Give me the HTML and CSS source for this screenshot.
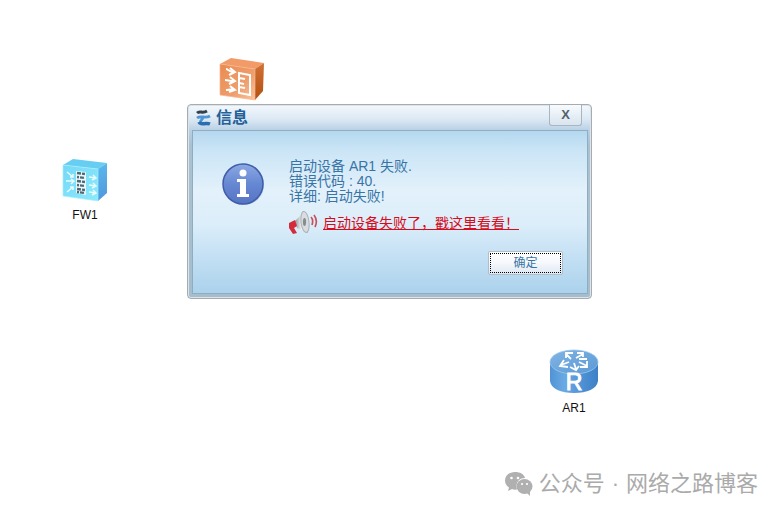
FILE: index.html
```html
<!DOCTYPE html>
<html lang="zh-CN">
<head>
<meta charset="utf-8">
<title>信息</title>
<link rel="stylesheet" href="styles.css">
</head>
<body>
<main class="canvas">
  <div class="node node-switch">
    <svg width="46" height="44" viewBox="0 0 46 44" aria-hidden="true">
      <defs>
        <linearGradient id="orangeFront" x1="0" y1="0" x2="1" y2="1"><stop offset="0" stop-color="#ea8a50"/><stop offset=".6" stop-color="#ee9e6d"/><stop offset="1" stop-color="#fbc39b"/></linearGradient>
        <linearGradient id="orangeSide" x1="0" y1="0" x2="0" y2="1"><stop offset="0" stop-color="#d07135"/><stop offset="1" stop-color="#b4500f"/></linearGradient>
      </defs>
      <path d="M1 7 12 1 45 6 36 12Z" fill="#f29a68"/>
      <path d="M36 12 45 6 44 34 36 43Z" fill="url(#orangeSide)"/>
      <path d="M1 7 36 12V43L1 38Z" fill="url(#orangeFront)" stroke="#f8b68c" stroke-width=".7"/>
      <g fill="none" stroke="#fff" stroke-width="2">
        <path d="M7 12c2 0 3 3 8 3M11 11l5 4-6 3M6 23c3 0 4 1 9 1M11 20l5 4-6 3M7 33c3 0 4-1 8 0M11 29l5 4-6 2"/>
        <path d="M20 16 31 18V38L20 36ZM20 21l6 1M20 26l5 1M20 30l6 1"/>
      </g>
    </svg>
  </div>
  <div class="node node-firewall">
    <svg width="46" height="44" viewBox="0 0 46 44" aria-hidden="true">
      <defs>
        <linearGradient id="cyanFront" x1="0" y1="0" x2="1" y2="1"><stop offset="0" stop-color="#75d8f6"/><stop offset="1" stop-color="#8aeafd"/></linearGradient>
        <linearGradient id="cyanSide" x1="0" y1="0" x2="0" y2="1"><stop offset="0" stop-color="#59b8ec"/><stop offset="1" stop-color="#5097dc"/></linearGradient>
      </defs>
      <path d="M1 7 11 1 45 5 36 11Z" fill="#68cdf2"/>
      <path d="M36 11 45 5V35L36 43Z" fill="url(#cyanSide)"/>
      <path d="M1 7 36 11V43L1 38Z" fill="url(#cyanFront)" stroke="#a4effd" stroke-width=".7"/>
      <path d="M14 13 24 14V37L14 35Z" fill="#eafaff"/>
      <g stroke="#4f6973" stroke-width="2.5">
        <path d="M15 15l8 1M15 23l8 1M15 31l8 1" stroke-dasharray="4 1"/>
        <path d="M15 19l8 1M15 27l8 1M15 34l8 1" stroke-dasharray="2 1 4 1"/>
      </g>
      <g fill="none" stroke="#e8fcff" stroke-width="1.5">
        <path d="M5 14l6 5M11 16v3H8M4 23h8M9 21l3 2-3 3M5 34l6-5M8 29h3v3M27 19l7 1M31 17l3 3-4 2M27 27l7 1M31 25l3 3-4 2M27 34l7 1M31 32l3 3-4 2"/>
      </g>
    </svg>
    <span class="node-label">FW1</span>
  </div>
  <div class="node node-router">
    <svg width="50" height="46" viewBox="0 0 50 46" aria-hidden="true">
      <defs>
        <linearGradient id="routerSide" x1="0" y1="0" x2="1" y2="0"><stop offset="0" stop-color="#5093d5"/><stop offset=".3" stop-color="#6ba9e4"/><stop offset=".7" stop-color="#4d8fd3"/><stop offset="1" stop-color="#3e80c6"/></linearGradient>
        <linearGradient id="routerTop" x1="0" y1="0" x2="1" y2="1"><stop offset="0" stop-color="#81b4e2"/><stop offset="1" stop-color="#5b99d6"/></linearGradient>
      </defs>
      <path d="M1 13V32C2 40 12 44 25 44S48 40 49 32V13Z" fill="url(#routerSide)"/>
      <ellipse cx="25" cy="13" rx="24" ry="12" fill="url(#routerTop)" stroke="#9bc6ec" stroke-width=".8"/>
      <g fill="none" stroke="#fff" stroke-width="1.8">
        <path d="M22 10 17 5M17 9V4h7M27 9l7-4M28 4h6v4M20 13l-8 3M15 11l-4 6 8 1M30 13l8 4M38 12v6h-7M30 10h8M25 14l2 6M21 18l6 3 3-4"/>
      </g>
      <text class="router-letter" x="25" y="41" text-anchor="middle">R</text>
    </svg>
    <span class="node-label">AR1</span>
  </div>

  <section class="dialog" role="dialog" aria-labelledby="dialog-title">
    <header class="titlebar">
      <svg width="16" height="18" viewBox="0 0 16 18" aria-hidden="true">
        <path d="M1 4C4 1 6 5 11 2" fill="none" stroke="#34404c" stroke-width="3"/>
        <path d="M1 9C5 6 9 10 14 7M7 9 4 13" fill="none" stroke="#4f94d3" stroke-width="2.8"/>
        <path d="M3 13C5 17 9 13 14 15" fill="none" stroke="#286eb1" stroke-width="3.5"/>
      </svg>
      <h1 class="title" id="dialog-title">信息</h1>
      <button class="close" type="button" aria-label="关闭">X</button>
    </header>
    <div class="body">
      <svg class="info-icon" width="44" height="44" viewBox="0 0 44 44" aria-hidden="true">
        <defs><linearGradient id="infoFill" x1="0" y1="0" x2="0" y2="1"><stop offset="0" stop-color="#8ca9e3"/><stop offset=".5" stop-color="#6687d2"/><stop offset="1" stop-color="#5674c4"/></linearGradient></defs>
        <circle cx="23" cy="23" r="20" fill="#9eb7da" opacity=".6"/>
        <circle cx="22" cy="22" r="20" fill="url(#infoFill)" stroke="#3f5ca9" stroke-width="1.5"/>
        <circle cx="22" cy="11" r="3.500" fill="#fff"/>
        <path d="M16 17H25V32H28V35H16V32H19V20H16Z" fill="#fff"/>
      </svg>
      <div class="content">
        <p class="message">启动设备<span class="latin"> AR1 </span>失败<span class="latin">.</span><br>错误代码<span class="latin"> : 40.</span><br>详细<span class="latin">: </span>启动失败<span class="latin">!</span></p>
        <div class="help">
          <svg width="30" height="26" viewBox="0 0 30 26" aria-hidden="true">
            <defs><linearGradient id="hornFill"><stop offset="0" stop-color="#8e969b"/><stop offset=".5" stop-color="#f0f2f3"/><stop offset="1" stop-color="#a8b0b5"/></linearGradient></defs>
            <path d="M6 11 15 2 19 23 8 18Z" fill="url(#hornFill)"/>
            <ellipse cx="16" cy="12" rx="4" ry="10.500" transform="rotate(-7 16 12)" fill="#d9dde0" stroke="#a9b1b5"/>
            <ellipse cx="15.500" cy="12" rx="1.600" ry="4" fill="#858d92"/>
            <path d="M0 13 6 10 8 16 5 18 8 23 4 24 0 18Z" fill="#d32b3c"/>
            <path d="M22 7C24 9 24 12 23 15M25 5C28 9 28 13 26 17" fill="none" stroke="#c8525a" stroke-width="1.700"/>
          </svg>
          <a class="help-link" href="#help">启动设备失败了，戳这里看看！</a>
        </div>
      </div>
      <button class="confirm" type="button">确定</button>
    </div>
  </section>

  <div class="watermark">
    <svg width="30" height="26" viewBox="0 0 30 26" aria-hidden="true">
      <path d="M11 1C5 1 1 5 1 9.500C1 12.500 2.500 15 5 16.500L4 20 8 18Q10 19 13 18.500C11 12 15 7 21 7C20 3 16 1 11 1Z" fill="#b0b0b0"/>
      <ellipse cx="20.500" cy="15.500" rx="8" ry="7.500" fill="#b0b0b0"/>
      <path d="M22 21 26 25 26 19Z" fill="#b0b0b0"/>
      <g fill="#fff"><circle cx="7.500" cy="7" r="1.300"/><circle cx="14" cy="7" r="1.300"/><circle cx="18" cy="13" r="1.100"/><circle cx="23" cy="13" r="1.100"/></g>
    </svg>
    <span class="watermark-text"><span>公众号</span><span>·</span><span>网络之路博客</span></span>
  </div>
</main>
</body>
</html>
```

FILE: styles.css
```css
* {
  box-sizing: border-box;
}

body {
  margin: 0;
  background: #fff;
  font-family: "Liberation Sans", "Noto Sans CJK SC", sans-serif;
}

.canvas {
  position: relative;
  min-height: 100vh;
  overflow: hidden;
}

svg {
  display: block;
  flex: none;
}

/* Devices placed freely on the topology canvas */
.node {
  position: absolute;
  display: flex;
  flex-direction: column;
  align-items: center;
  gap: 4px;
}

.node-switch {
  left: 219px;
  top: 57px;
}

.node-firewall {
  left: 62px;
  top: 158px;
}

.node-router {
  left: 549px;
  top: 349px;
}

.node-label {
  font-size: 12px;
  line-height: 18px;
  color: #111;
}

.router-letter {
  font-size: 23px;
  fill: #fff;
  stroke: #fff;
  stroke-width: 1px;
}

/* Dialog window */
.dialog {
  position: absolute;
  left: 187px;
  top: 104px;
  width: 405px;
  padding: 0 3px 4px 4px;
  border: 1px solid #a5adb3;
  border-radius: 4px;
  background: linear-gradient(#f3f8fc, #dce9f4 14px, #b7cfe4 26px, #a9c1d1 40px, #a5bdcc);
  box-shadow: inset 0 0 0 1px #dce4e9;
}

.titlebar {
  display: flex;
  align-items: flex-start;
  gap: 4px;
  height: 25px;
  padding: 0 6px 0 4px;
}

.titlebar svg {
  margin-top: 4px;
}

.title {
  flex: 1;
  margin: 0;
  font-size: 16px;
  line-height: 25px;
  color: #24619a;
}

.close {
  width: 33px;
  height: 21px;
  padding: 0;
  border: 1px solid #a9b5c0;
  border-top: 0;
  border-radius: 0 0 3px 3px;
  background: linear-gradient(#f8fbfd, #d8e4ef);
  font: bold 13px/20px "Liberation Sans", sans-serif;
  color: #54616c;
}

.body {
  display: grid;
  grid-template-columns: 44px 1fr;
  column-gap: 24px;
  padding: 28px 24px 18px 28px;
  border: 1px solid #90adbf;
  background: linear-gradient(#b5d8ef, #cbe5f6 20px, #e3f1fb 60px, #dceefa 92px, #c4e0f4 125px, #abd2ec);
}

.info-icon {
  margin-top: 3px;
}

.message {
  margin: 0;
  font-size: 14px;
  line-height: 15px;
  color: #3874a5;
}

.latin {
  font-size: 14px;
  white-space: pre-wrap;
}

.help {
  display: flex;
  align-items: center;
  gap: 4px;
  margin-top: 6px;
}

.help-link {
  font-size: 14px;
  line-height: 20px;
  color: #d60b1b;
  white-space: nowrap;
}

.confirm {
  grid-column: 2;
  justify-self: end;
  width: 75px;
  height: 24px;
  margin-top: 15px;
  padding: 0;
  border: 1px solid #b3bdc9;
  border-radius: 2px;
  outline: 1px dotted #000;
  outline-offset: -3px;
  background: linear-gradient(#fff, #f5f8fc 50%, #dfe8f2);
  font: 12px/18px "Liberation Sans", "Noto Sans CJK SC", sans-serif;
  color: #3874a5;
}

.watermark {
  position: absolute;
  right: 24px;
  bottom: 14px;
  display: flex;
  align-items: center;
  gap: 5px;
  color: #aaa;
}

.watermark-text {
  display: flex;
  gap: 7px;
  font-size: 22px;
  line-height: 32px;
}
```
